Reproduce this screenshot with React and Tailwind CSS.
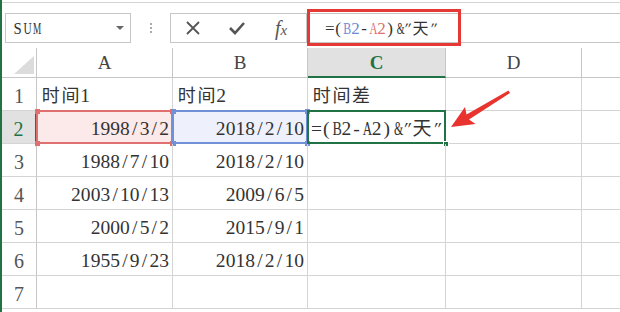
import React from "react";

const SERIF = { fontFamily: "'Liberation Serif', 'DejaVu Serif', 'Noto Sans CJK SC', serif" };
const CJK = { fontFamily: "'Noto Sans CJK SC', sans-serif" };

const rows = [
  ["时间1", "时间2", "时间差"],
  ["1998/3/2", "2018/2/10", ""],
  ["1988/7/10", "2018/2/10", ""],
  ["2003/10/13", "2009/6/5", ""],
  ["2000/5/2", "2015/9/1", ""],
  ["1955/9/23", "2018/2/10", ""],
  ["", "", ""],
];

const COLORS = { b: "text-[#6d8bd6]", r: "text-[#e07070]" };
// approximate advance widths (em) of Liberation Serif glyphs wider than a half cell
const WIDTHS = { A: 0.722, B: 0.667, S: 0.556, U: 0.722, M: 0.889, "&": 0.778 };

// Renders text in a SimSun-like grid: latin chars on half-width cells, CJK on full cells.
function Mono({ text, cw = 9.8, size = 19.5, cjkSize = 18, colors }) {
  const chars = Array.from(text);
  return (
    <span className="inline-flex items-baseline leading-none whitespace-pre">
      {chars.map((ch, i) => {
        const isCjk = /[\u4e00-\u9fff]/.test(ch);
        const col = colors && colors[i] ? COLORS[colors[i]] : "";
        if (isCjk) {
          return (
            <span key={i} style={{ ...CJK, width: cw * 2, fontSize: cjkSize }} className={`inline-block text-center ${col}`}>
              {ch}
            </span>
          );
        }
        const w = WIDTHS[ch];
        const quote = ch === "″";
        let transform;
        if (w) {
          const s = Math.min(1, (cw - 0.8) / (w * size));
          transform = `scaleX(${s.toFixed(3)})`;
        } else if (quote) {
          transform = "skewX(-12deg)";
        }
        return (
          <span key={i} className={`inline-block ${col}`} style={{ width: cw }}>
            <span
              style={{ ...SERIF, fontSize: quote ? size * 0.95 : size, transform, transformOrigin: "center" }}
              className="block text-center"
            >
              {ch}
            </span>
          </span>
        );
      })}
    </span>
  );
}

function Corner({ color, pos }) {
  return <div className={`absolute w-[5px] h-[5px] ${pos}`} style={{ background: color }} />;
}

export default function App() {
  return (
    <div className="relative w-[620px] h-[312px] overflow-hidden bg-white border-l-2 border-[#217346] flex flex-col text-[#333]">
      {/* top strip */}
      <div className="h-[3px] shrink-0 border-b border-[#d4d4d4]" />
      {/* formula bar */}
      <div className="h-[45px] shrink-0 flex items-start pt-[10px]">
        <div className="ml-[3px] w-[126px] h-[30px] border border-[#c6c6c6] flex items-center pl-[7px] pr-[6px]">
          <span className="flex-1 text-[#333]">
            <Mono text="SUM" cw={9} size={17} />
          </span>
          <svg width="8" height="5" viewBox="0 0 8 5"><path d="M0 0 L8 0 L4 4 Z" fill="#666" /></svg>
        </div>
        <div className="w-[39px] h-[30px] flex flex-col items-center justify-center gap-[2px]">
          <div className="w-[2px] h-[2px] bg-[#aaa]" />
          <div className="w-[2px] h-[2px] bg-[#aaa]" />
          <div className="w-[2px] h-[2px] bg-[#aaa]" />
        </div>
        <div className="flex-1 h-[30px] border-y border-l border-[#c6c6c6] flex">
          <div className="w-[136px] flex items-center border-r border-[#c6c6c6]">
            <div className="w-[44px] flex justify-center">
              <svg width="16" height="16" viewBox="0 0 16 16"><path d="M2 2 L14 14 M14 2 L2 14" stroke="#555" strokeWidth="1.8" /></svg>
            </div>
            <div className="w-[44px] flex justify-center">
              <svg width="18" height="16" viewBox="0 0 18 16"><path d="M2 8 L7 13 L16 3" stroke="#555" strokeWidth="2.6" fill="none" /></svg>
            </div>
            <div className="w-[44px] flex justify-center">
              <span style={SERIF} className="italic text-[20px] text-[#555] leading-none">
                f<span className="text-[15px]">x</span>
              </span>
            </div>
          </div>
          <div className="flex-1 flex items-center pl-[18px] text-[#333]">
            <Mono
              text={"=(B2-A2)&″天″"}
              cw={8.7}
              size={17}
              cjkSize={16}
              colors={[null, null, "b", "b", null, "r", "r"]}
            />
          </div>
        </div>
      </div>

      {/* sheet */}
      <div className="grid grid-cols-[35px_136px_135px_138px_136px_1fr] grid-rows-[30px_repeat(7,33px)]">
        {/* header row */}
        <div className="relative border-r border-b border-[#c6c6c6]">
          <svg className="absolute right-[2px] bottom-[3px]" width="20" height="18" viewBox="0 0 20 18"><path d="M20 0 L20 18 L0 18 Z" fill="#dcdcdc" /></svg>
        </div>
        {["A", "B"].map((l) => (
          <div key={l} style={SERIF} className="border-r border-b border-[#c6c6c6] flex items-center justify-center text-[19px] text-[#444] pt-[2px]">{l}</div>
        ))}
        <div style={SERIF} className="bg-[#e1e1e1] border-r border-[#c6c6c6] border-b-2 border-b-[#217346] flex items-center justify-center text-[19px] text-[#217346] font-bold pt-[2px]">C</div>
        <div style={SERIF} className="border-r border-b border-[#c6c6c6] flex items-center justify-center text-[19px] text-[#444] pt-[2px]">D</div>
        <div className="border-b border-[#c6c6c6]" />

        {rows.map((r, i) => {
          const n = i + 1;
          const sel = n === 2;
          return (
            <React.Fragment key={n}>
              <div
                style={SERIF}
                className={
                  sel
                    ? "bg-[#e1e1e1] border-r-2 border-r-[#217346] border-b border-b-[#d4d4d4] flex items-center justify-center text-[20px] text-[#217346] pt-[3px]"
                    : "border-r border-[#c6c6c6] border-b border-b-[#d4d4d4] flex items-center justify-center text-[20px] text-[#555] pt-[3px]"
                }
              >
                {n}
              </div>
              {/* A */}
              <div className={`relative border-r border-b border-[#d4d4d4] flex items-center ${n === 1 ? "justify-start pl-[4px]" : "justify-end pr-[3px]"} ${sel ? "bg-[#fce9e9]" : ""} pt-[3px]`}>
                {sel && (
                  <>
                    <div className="absolute inset-[-1px] border-2 border-[#e07070]" />
                    <Corner color="#e07070" pos="left-[-2px] top-[-2px]" />
                    <Corner color="#e07070" pos="right-[-3px] top-[-2px]" />
                    <Corner color="#e07070" pos="left-[-2px] bottom-[-3px]" />
                    <Corner color="#e07070" pos="right-[-3px] bottom-[-3px]" />
                  </>
                )}
                <span className="relative"><Mono text={r[0]} /></span>
              </div>
              {/* B */}
              <div className={`relative border-r border-b border-[#d4d4d4] flex items-center ${n === 1 ? "justify-start pl-[4px]" : "justify-end pr-[3px]"} ${sel ? "bg-[#eef1fb]" : ""} pt-[3px]`}>
                {sel && (
                  <>
                    <div className="absolute inset-[-1px] border-2 border-[#7090d8]" />
                    <Corner color="#7090d8" pos="left-[-2px] top-[-2px]" />
                    <Corner color="#7090d8" pos="right-[-3px] top-[-2px]" />
                    <Corner color="#7090d8" pos="left-[-2px] bottom-[-3px]" />
                    <Corner color="#7090d8" pos="right-[-3px] bottom-[-3px]" />
                  </>
                )}
                <span className="relative"><Mono text={r[1]} /></span>
              </div>
              {/* C */}
              <div className="relative border-r border-b border-[#d4d4d4] flex items-center justify-start pl-[4px] pt-[3px]">
                {sel ? (
                  <>
                    <div className="absolute inset-[-1px] border-2 border-[#217346]" />
                    <div className="absolute right-[-4px] bottom-[-4px] w-[6px] h-[6px] bg-[#217346] border border-white" />
                    <span className="relative -ml-[1px]">
                      <Mono text={"=(B2-A2)&″天″"} cw={10.1} size={19.5} cjkSize={19} />
                    </span>
                  </>
                ) : (
                  <span className="relative"><Mono text={r[2]} /></span>
                )}
              </div>
              <div className="border-r border-b border-[#d4d4d4]" />
              <div className="border-b border-[#d4d4d4]" />
            </React.Fragment>
          );
        })}
      </div>

      {/* annotation: red box around formula */}
      <div className="absolute left-[305px] top-[9px] w-[154px] h-[37px] border-[3px] border-[#e53935]" />
      {/* annotation arrow */}
      <svg className="absolute left-0 top-0" width="620" height="312" viewBox="0 0 620 312">
        <polygon
          points="451,127 465,107 466.5,114.5 508.5,90.5 510,93 469,119.5 475.5,124"
          transform="translate(-2,0)"
          fill="#e8332f"
        />
      </svg>
    </div>
  );
}
